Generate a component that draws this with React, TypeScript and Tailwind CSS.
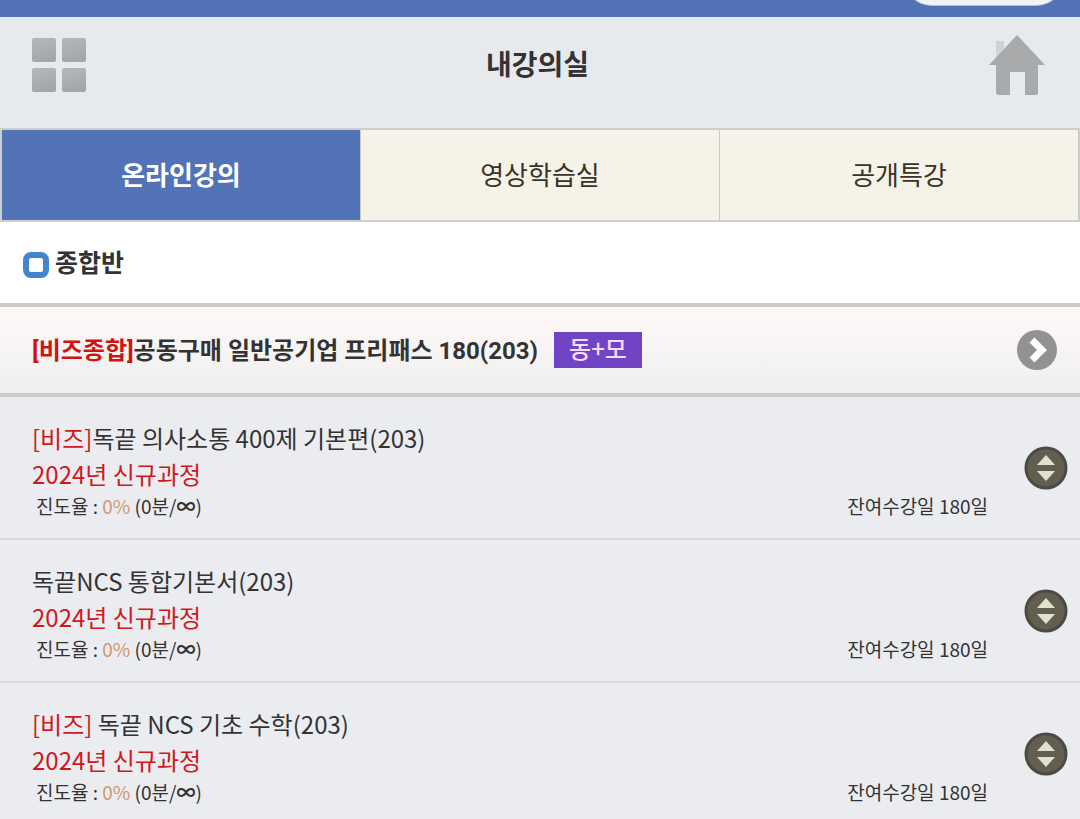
import { useState } from 'react'
import clsx from 'clsx'

interface Lecture {
  id: number
  tag?: string
  title: string
  note: string
  progress: number
  watched: string
  daysLeft: number
}

const TABS = ['온라인강의', '영상학습실', '공개특강']

const LECTURES: Lecture[] = [
  { id: 1, tag: '[비즈]', title: '독끝 의사소통 400제 기본편(203)', note: '2024년 신규과정', progress: 0, watched: '0분', daysLeft: 180 },
  { id: 2, title: '독끝NCS 통합기본서(203)', note: '2024년 신규과정', progress: 0, watched: '0분', daysLeft: 180 },
  { id: 3, tag: '[비즈]', title: ' 독끝 NCS 기초 수학(203)', note: '2024년 신규과정', progress: 0, watched: '0분', daysLeft: 180 },
]

function MenuIcon() {
  return (
    <svg width="54" height="56" viewBox="0 0 54 56" aria-hidden="true">
      <defs>
        <linearGradient id="tile" x1="0" y1="0" x2="0.3" y2="1">
          <stop offset="0" stopColor="#b5b8b9" />
          <stop offset="1" stopColor="#a5a6a7" />
        </linearGradient>
      </defs>
      <g fill="url(#tile)">
        <rect x="0" y="1" width="24" height="24" rx="2" />
        <rect x="30" y="1" width="24" height="24" rx="2" />
        <rect x="0" y="31" width="24" height="24" rx="2" />
        <rect x="30" y="31" width="24" height="24" rx="2" />
      </g>
    </svg>
  )
}

function HomeIcon() {
  return (
    <svg width="56" height="62" viewBox="0 0 56 62" aria-hidden="true">
      <path d="M7 7h8v8l-8 8z" fill="#d0d3d4" />
      <path d="M28 1 56 31h-7v28q0 2-2 2H36V38H21v23H10q-3 0-3-3V31H0z" fill="#a8a9aa" />
    </svg>
  )
}

function ArrowIcon() {
  return (
    <svg width="42" height="42" viewBox="0 0 42 42" aria-hidden="true">
      <circle cx="21" cy="21" r="20" fill="#929292" />
      <path d="m16 11 10 10-10 10" fill="none" stroke="#fff" strokeWidth="7" />
    </svg>
  )
}

function ToggleIcon() {
  return (
    <svg width="44" height="44" viewBox="0 0 44 44" aria-hidden="true">
      <circle cx="22" cy="22" r="20" fill="#625f50" stroke="#4b4a47" strokeWidth="3" />
      <path d="m22 9 9 10H13zM22 35l9-10H13z" fill="#e3e0cf" />
    </svg>
  )
}

function LectureRow({ lecture }: { lecture: Lecture }) {
  return (
    <li className="flex h-[143px] items-center border-b-2 border-[#d6d8dc] pr-3 pl-8">
      <div className="min-w-0 flex-1 pt-1">
        <a href="#" className="block text-2xl leading-9 whitespace-pre">
          {lecture.tag && <span className="text-[#cf1820]">{lecture.tag}</span>}
          {lecture.title}
        </a>
        <p className="text-2xl leading-9 text-[#cf1820]">{lecture.note}</p>
        <div className="flex justify-between pr-9 pl-1 text-[19px] leading-7">
          <span>
            진도율 : <span className="text-[#cf9870]">{lecture.progress}%</span> ({lecture.watched}/
            <span className="font-bold">∞</span>)
          </span>
          <span>잔여수강일 {lecture.daysLeft}일</span>
        </div>
      </div>
      <button type="button" aria-label="펼치기">
        <ToggleIcon />
      </button>
    </li>
  )
}

export default function App() {
  const [active, setActive] = useState(0)

  return (
    <div className="h-screen overflow-hidden bg-[#ebecef] font-['Noto_Sans_CJK_KR',sans-serif] text-[#333335]">
      <div className="flex h-[17px] justify-end overflow-hidden bg-[#5373b8] pr-4">
        <div className="-mt-[50px] h-14 w-40 rounded-full border-b border-[#b5c0d8] bg-[#f2f4f4]" />
      </div>

      <header className="flex h-[111px] items-center justify-between bg-[#e6eaed] pr-[35px] pb-4 pl-8">
        <button type="button" aria-label="메뉴">
          <MenuIcon />
        </button>
        <h1 className="pb-1 text-[28px] leading-10 font-bold">내강의실</h1>
        <button type="button" aria-label="홈">
          <HomeIcon />
        </button>
      </header>

      <nav className="grid h-[94px] grid-cols-3 border-2 border-r border-[#cdcfcf]">
        {TABS.map((tab, i) => (
          <button
            key={tab}
            type="button"
            onClick={() => setActive(i)}
            className={clsx(
              'border-r border-[#c8c8c4] pb-0.5 text-[26px] leading-9',
              i === active ? 'bg-[#5373b8] font-bold text-white' : 'bg-[#f5f2e7] text-[#3b3228]',
            )}
          >
            {tab}
          </button>
        ))}
      </nav>

      <section className="bg-white">
        <div className="flex h-[81px] items-center gap-1.5 px-[23px]">
          <span className="mt-1 size-[26px] rounded-lg border-[6px] border-[#4285cf] bg-white" />
          <h2 className="pb-1 text-[25px] leading-9 font-bold">종합반</h2>
        </div>
      </section>

      <div className="flex h-[94px] items-center border-y-4 border-[#cbcbcb] bg-linear-to-b from-[#fff9f8] to-[#efefef] pr-[22px] pl-8">
        <a href="#" className="pt-0.5 font-[Roboto,'Noto_Sans_CJK_KR',sans-serif] text-2xl leading-9 font-bold">
          <span className="text-[#d01414]">[비즈종합]</span>공동구매 일반공기업 프리패스 180(203)
        </a>
        <span className="ml-4 flex h-9 w-[88px] items-center justify-center bg-[#7044c4] pb-1 text-2xl leading-8 font-medium text-[#f3dcff]">
          동+모
        </span>
        <button type="button" aria-label="이동" className="ml-auto">
          <ArrowIcon />
        </button>
      </div>

      <ul>
        {LECTURES.map((lecture) => (
          <LectureRow key={lecture.id} lecture={lecture} />
        ))}
      </ul>
    </div>
  )
}
